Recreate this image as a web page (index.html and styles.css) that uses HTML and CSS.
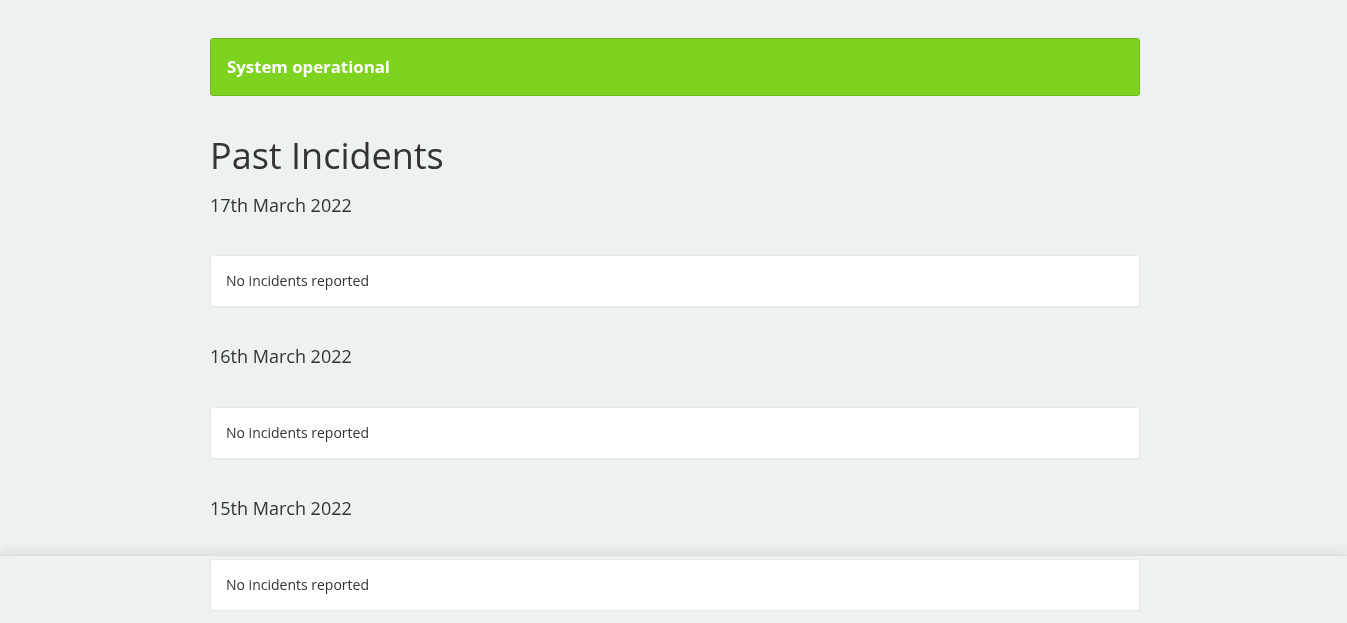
FILE: index.html
```html
<!DOCTYPE html>
<html lang="en">
<head>
<meta charset="utf-8">
<title>Status</title>
<link rel="stylesheet" href="styles.css">
</head>
<body>
<div class="page">
  <div class="container">
    <div class="status-bar">System operational</div>
    <h1 class="section-title">Past Incidents</h1>
    <div class="day">
      <h4 class="day-title">17th March 2022</h4>
      <div class="panel">No incidents reported</div>
    </div>
    <div class="day">
      <h4 class="day-title">16th March 2022</h4>
      <div class="panel">No incidents reported</div>
    </div>
    <div class="day">
      <h4 class="day-title">15th March 2022</h4>
      <div class="panel">No incidents reported</div>
    </div>
  </div>
</div>
<div class="bottom-shade"></div>
</body>
</html>
```
FILE: styles.css
```css
html, body {
  margin: 0;
  padding: 0;
}
body {
  background: #eef1f2;
  color: #333333;
  font-family: "Open Sans", "Noto Sans", sans-serif;
  overflow: hidden;
}
.page {
  position: relative;
  z-index: 1;
  padding-top: 38px;
}
.container {
  width: 930px;
  margin: 0 0 0 210px;
}
.status-bar {
  box-sizing: border-box;
  height: 58px;
  display: flex;
  align-items: center;
  padding: 0 16px 2px 16px;
  background: #7ed321;
  border: 1px solid #6fbb1c;
  border-radius: 3px;
  color: #ffffff;
  font-weight: 700;
  font-size: 16.8px;
}
.section-title {
  margin: 40px 0 0 0;
  font-size: 36px;
  line-height: 40px;
  font-weight: 400;
  color: #333333;
}
.day-title {
  margin: 17px 0 38px 0;
  font-size: 18px;
  line-height: 24px;
  font-weight: 400;
  color: #333333;
}
.day + .day .day-title {
  margin-top: 37px;
  margin-bottom: 39px;
}
.panel {
  background: #ffffff;
  border: 1px solid #e6e8e9;
  border-radius: 3px;
  box-shadow: 0 1px 1px rgba(0, 0, 0, 0.04);
  padding: 15px 15px;
  font-size: 14px;
  line-height: 20px;
  color: #333333;
}
.bottom-shade {
  position: fixed;
  left: 0;
  right: 0;
  bottom: 0;
  height: 67px;
  z-index: 0;
  background: #eef1f2;
  border-top: 1px solid #dcdfe1;
  box-shadow: 0 -4px 12px rgba(0, 0, 0, 0.08);
}
```
